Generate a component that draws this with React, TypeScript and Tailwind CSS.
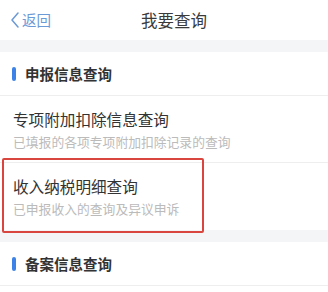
import React from 'react';

interface QueryItemProps {
  title: string;
  desc: string;
  last?: boolean;
}

const SectionHeader: React.FC<{ label: string }> = ({ label }) => (
  <div className="flex h-[44px] items-center border-b border-[#eeeeee] bg-white pl-[12px]">
    <span className="h-[14px] w-[4px] rounded-full bg-[#3d82e6]" />
    <span className="ml-[9px] text-[14.5px] font-bold text-[#333]">{label}</span>
  </div>
);

const QueryItem: React.FC<QueryItemProps> = ({ title, desc, last }) => (
  <div
    className={`flex h-[67px] flex-col justify-center bg-white pl-[13px] ${
      last ? '' : 'border-b border-[#eeeeee]'
    }`}
  >
    <div className="text-[15.6px] leading-[22px] text-[#333]">{title}</div>
    <div className="mt-[3px] text-[12.8px] leading-[18px] text-[#bbbbbb]">{desc}</div>
  </div>
);

const App: React.FC = () => {
  return (
    <div
      className="relative h-[292px] w-[328px] overflow-hidden bg-white"
      style={{ fontFamily: '"Noto Sans CJK SC", "Noto Sans", sans-serif' }}
    >
      <div className="flex h-[40px] items-center bg-white pl-[10px]">
        <div className="flex items-center text-[#6c9ad6]">
          <svg width="10" height="16" viewBox="0 0 10 16" fill="none">
            <path d="M8 1 L2 8 L8 15" stroke="#6c9ad6" strokeWidth="1.5" strokeLinecap="round" strokeLinejoin="round" />
          </svg>
          <span className="ml-[2px] text-[14.5px]">返回</span>
        </div>
        <div className="ml-[90px] text-[16.5px] text-[#3a3a3a]">我要查询</div>
      </div>

      <div className="h-[12px] bg-[#f4f5f7]" />

      <SectionHeader label="申报信息查询" />
      <QueryItem title="专项附加扣除信息查询" desc="已填报的各项专项附加扣除记录的查询" />
      <QueryItem title="收入纳税明细查询" desc="已申报收入的查询及异议申诉" last />

      <div className="h-[12px] bg-[#f4f5f7]" />

      <SectionHeader label="备案信息查询" />

      <div className="pointer-events-none absolute left-[2px] top-[158px] h-[75px] w-[202px] rounded-[2px] border-2 border-[#d9463f]" />
    </div>
  );
};

export default App;
